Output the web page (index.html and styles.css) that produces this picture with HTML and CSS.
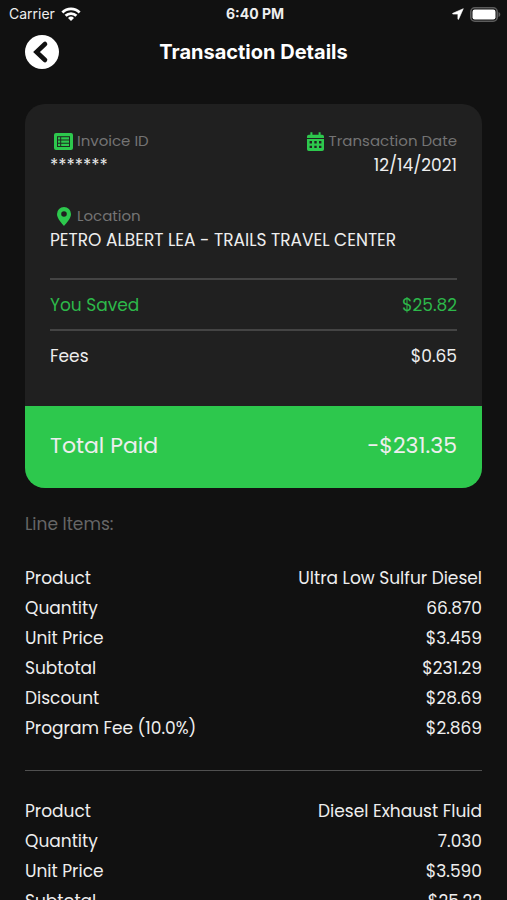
FILE: index.html
```html
<!DOCTYPE html>
<html lang="en">
<head>
<meta charset="utf-8">
<meta name="viewport" content="width=device-width, initial-scale=1">
<title>Transaction Details</title>
<link rel="stylesheet" href="styles.css">
</head>
<body>
<div class="app">
  <div class="status">
    <div class="status-left">
      <span>Carrier</span>
      <svg width="20" height="14" viewBox="0 0 20 14" fill="none" stroke="#fff" stroke-width="2.8" aria-hidden="true">
        <path d="M1.4 5.4a12.2 12.2 0 0 1 17.2 0"/>
        <path d="M4.6 8.8a7.6 7.6 0 0 1 10.800 0"/>
        <path d="M10 14l-3-3.100a4.300 4.300 0 0 1 6 0z" fill="#fff" stroke="none"/>
      </svg>
    </div>
    <span class="status-time">6:40 PM</span>
    <div class="status-right">
      <svg width="12" height="12" viewBox="0 0 12 12" fill="#fff" stroke="#fff" stroke-width=".6" stroke-linejoin="round" aria-hidden="true"><path d="M11.300.7 6.600 11.200c-.2.4-.7.3-.7-.1V6.100H.9c-.5 0-.5-.6-.1-.8z"/></svg>
      <svg width="31" height="15" viewBox="0 0 31 15" aria-hidden="true">
        <rect x=".8" y=".8" width="26.4" height="13.4" rx="4" fill="none" stroke="#5c5c5c" stroke-width="1.6"/>
        <rect x="2.5" y="2.5" width="23" height="10" rx="2.2" fill="#fff"/>
        <path d="M28.500 5c2.400.9 2.400 4.100 0 5z" fill="#5c5c5c"/>
      </svg>
    </div>
  </div>

  <header class="header">
    <button class="back" type="button" aria-label="Back">
      <svg width="34" height="34" viewBox="0 0 34 34" aria-hidden="true">
        <circle cx="17" cy="17" r="17" fill="#fff"/>
        <path d="M20 9 11.500 17l8.500 8" fill="none" stroke="#111" stroke-width="4.600" stroke-linejoin="miter" stroke-linecap="round"/>
      </svg>
    </button>
    <h1 class="title">Transaction Details</h1>
  </header>

  <main class="content">
    <section class="card">
      <div class="card-body">
        <div class="fields">
          <div class="field">
            <div class="label">
              <span class="icon"><svg width="19" height="17" viewBox="0 0 19 17" aria-hidden="true">
                <rect width="19" height="17" rx="2" fill="#2dc84d"/>
                <rect x="3" y="3.200" width="13" height="10.800" fill="#1f2a21"/>
                <path d="M4 4.200h2.200v2.200H4zM4 7.500h2.200v2.200H4zM4 10.800h2.200V13H4zM7.200 4.200H15v2.200H7.200zM7.200 7.500H15v2.200H7.200zM7.200 10.800H15V13H7.200z" fill="#2dc84d"/>
              </svg></span>
              <span>Invoice ID</span>
            </div>
            <div class="value">*******</div>
          </div>
          <div class="field field-end">
            <div class="label">
              <span class="icon"><svg width="17" height="19" viewBox="0 0 17 19" fill="#2dc84d" aria-hidden="true">
                <path d="M3.400.3h2v2.500h6.200V.3h2v2.500h1.600A1.800 1.800 0 0 1 17 4.600V6H0V4.600A1.800 1.800 0 0 1 1.800 2.800H3.400z"/>
                <path fill-rule="evenodd" d="M0 7h17v10.200a1.800 1.800 0 0 1-1.800 1.800H1.800A1.800 1.800 0 0 1 0 17.200zM2.600 9v2.400H5V9zM7.300 9v2.400h2.400V9zM12 9v2.400h2.400V9zM2.600 13.700v2.400H5v-2.400zM7.300 13.700v2.400h2.400v-2.400zM12 13.700v2.400h2.400v-2.400z"/>
              </svg></span>
              <span>Transaction Date</span>
            </div>
            <div class="value">12/14/2021</div>
          </div>
        </div>
        <div class="field">
          <div class="label">
            <span class="icon"><svg width="14" height="19" viewBox="0 0 14 19" aria-hidden="true"><path fill="#2dc84d" fill-rule="evenodd" d="M7 0a7 7 0 0 1 7 7c0 4.500-4.500 9-7 12C4.500 16 0 11.500 0 7a7 7 0 0 1 7-7zm0 4.200a2.800 2.800 0 1 0 0 5.600 2.800 2.800 0 0 0 0-5.600z"/></svg></span>
            <span>Location</span>
          </div>
          <div class="value">PETRO ALBERT LEA - TRAILS TRAVEL CENTER</div>
        </div>
        <dl class="amounts">
          <div class="amount saved"><dt>You Saved</dt><dd>$25.82</dd></div>
          <div class="amount"><dt>Fees</dt><dd>$0.65</dd></div>
        </dl>
      </div>
      <div class="total"><span>Total Paid</span><span>-$231.35</span></div>
    </section>

    <h2 class="items-title">Line Items:</h2>
    <dl class="item">
      <div class="row"><dt>Product</dt><dd>Ultra Low Sulfur Diesel</dd></div>
      <div class="row"><dt>Quantity</dt><dd>66.870</dd></div>
      <div class="row"><dt>Unit Price</dt><dd>$3.459</dd></div>
      <div class="row"><dt>Subtotal</dt><dd>$231.29</dd></div>
      <div class="row"><dt>Discount</dt><dd>$28.69</dd></div>
      <div class="row"><dt>Program Fee (10.0%)</dt><dd>$2.869</dd></div>
    </dl>
    <dl class="item">
      <div class="row"><dt>Product</dt><dd>Diesel Exhaust Fluid</dd></div>
      <div class="row"><dt>Quantity</dt><dd>7.030</dd></div>
      <div class="row"><dt>Unit Price</dt><dd>$3.590</dd></div>
      <div class="row"><dt>Subtotal</dt><dd>$25.22</dd></div>
    </dl>
  </main>
</div>
</body>
</html>
```
FILE: styles.css
```css
* {
  box-sizing: border-box;
}

body {
  margin: 0;
  background: #111;
  color: #eee;
  font-family: Poppins, Inter, sans-serif;
  font-size: 17px;
  line-height: 24px;
}

h1, h2, dl, dd {
  margin: 0;
}

.app {
  display: flex;
  flex-direction: column;
  height: 100vh;
}

.status,
.header {
  display: grid;
  grid-template-columns: 1fr auto 1fr;
  align-items: center;
  flex: none;
}

.status {
  height: 28px;
  padding: 0 6px 0 9px;
  font-family: Inter, sans-serif;
  font-size: 14px;
}

.status-left,
.status-right {
  display: flex;
  align-items: center;
  gap: 6px;
}

.status-right {
  justify-content: flex-end;
}

.status-time {
  font-weight: 700;
}

.header {
  height: 48px;
  padding: 0 25px;
}

.back {
  width: 34px;
  height: 34px;
  padding: 0;
  border: 0;
  background: none;
  cursor: pointer;
}

.back svg {
  display: block;
}

.title {
  color: #fff;
  font-family: Inter, sans-serif;
  font-size: 20px;
  font-weight: 700;
}

.content {
  flex: 1;
  min-height: 0;
  padding: 28px 25px 0;
  overflow-y: auto;
  scrollbar-width: none;
}

.card {
  border-radius: 20px;
  background: #202020;
  overflow: hidden;
}

.card-body {
  padding: 25px 25px 26px;
}

.fields {
  display: flex;
  justify-content: space-between;
  margin-bottom: 27px;
}

.field-end {
  text-align: right;
}

.label {
  display: flex;
  align-items: center;
  color: #747474;
  font-size: 15px;
}

.field-end .label {
  justify-content: flex-end;
}

.icon {
  display: flex;
  justify-content: center;
  width: 27px;
}

.amounts {
  margin-top: 26px;
}

.amount {
  display: flex;
  justify-content: space-between;
  padding: 13px 0 12px;
  border-top: 2px solid #444;
}

.saved {
  color: #2db84a;
}

.total {
  display: flex;
  justify-content: space-between;
  padding: 24px 25px 26px;
  background: #2dc84d;
  font-size: 22px;
  line-height: 32px;
}

.items-title {
  margin: 24px 0 27px;
  color: #666;
  font-size: 17px;
  font-weight: 400;
}

.item + .item {
  margin-top: 27px;
  padding-top: 25px;
  border-top: 1px solid #505050;
}

.row {
  display: flex;
  justify-content: space-between;
  line-height: 30px;
}
```
